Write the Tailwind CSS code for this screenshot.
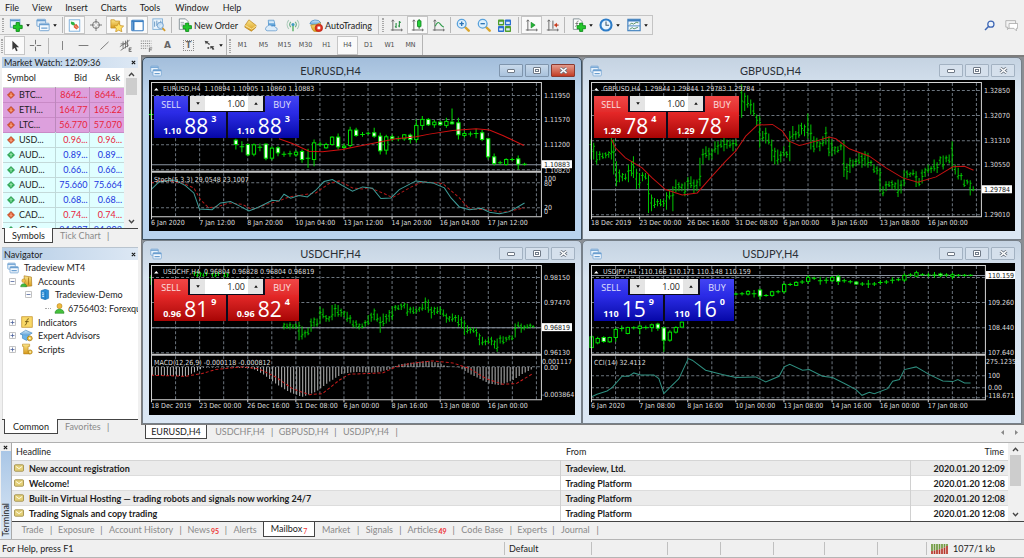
<!DOCTYPE html>
<html lang="en">
<head>
<meta charset="utf-8">
<title>Tradeview MT4</title>
<script src="https://cdn.jsdelivr.net/npm/@tailwindcss/browser@4"></script>
</head>
<body class="flex min-h-screen flex-col bg-[#f0f0f0] font-['Lato','Open_Sans',sans-serif] text-[9px] leading-[11px] text-[#1c1c1c]">

<svg width="0" height="0" class="absolute" aria-hidden="true">
  <defs>
    <linearGradient id="gold" x1="0" y1="0" x2="0" y2="1"><stop offset="0" stop-color="#fbe588"/><stop offset="1" stop-color="#d79a1c"/></linearGradient>
    <linearGradient id="sky" x1="0" y1="0" x2="0" y2="1"><stop offset="0" stop-color="#d6ecfb"/><stop offset="1" stop-color="#3f8fd0"/></linearGradient>
    <symbol id="plus" viewBox="0 0 10 10"><path d="M3.4.6h3.2v2.8h2.8v3.2H6.6v2.8H3.4V6.6H.6V3.4h2.8z" fill="#22c72b" stroke="#0c8a17" stroke-width=".9"/></symbol>
    <symbol id="i-newchart" viewBox="0 0 16 16"><rect x="1.5" y="1.500" width="11" height="9" fill="#e8f3fc" stroke="#6fa3d2"/><path d="M1.500 3h11" stroke="#5d96ca" stroke-width="1.500"/><use href="#plus" x="4" y="4.500" width="12" height="11.500"/></symbol>
    <symbol id="i-windows" viewBox="0 0 16 16"><rect x="1" y="1.500" width="10" height="8" rx="1" fill="#e6f1fb" stroke="#6b9fd0"/><path d="M1 3h10" stroke="#6b9fd0" stroke-width="1.600"/><rect x="4" y="6" width="11" height="8.500" rx="1" fill="#f4f9fe" stroke="#6b9fd0"/><path d="M4 7.500h11M6 11.500h7" stroke="#6b9fd0" stroke-width="1.500"/></symbol>
    <symbol id="i-market" viewBox="0 0 16 16"><rect x="1.500" y="1" width="13" height="14" fill="#fdfefe" stroke="#6aa5d8"/><path d="M3.500 3l4 1 1.500 3-2.500 1L3.500 6z" fill="#2eb344"/><path d="M7.500 7l3-1 3 4-3 3L7 10z" fill="#e2603a"/><path d="M8.500 8l3 3" stroke="#f7c9a6"/></symbol>
    <symbol id="i-target" viewBox="0 0 16 16"><circle cx="8" cy="8" r="4.600" fill="none" stroke="#6d6d6d" stroke-width="1.200"/><path d="M8 0v6M8 10v6M0 8h6M10 8h6" stroke="#6d6d6d" stroke-width="1.200"/></symbol>
    <symbol id="i-favorites" viewBox="0 0 16 16"><path d="M1 2h4l1 1.500h5v8H1z" fill="url(#gold)" stroke="#c18a1c" stroke-width=".8"/><path d="M10 5.200l1.700 3.500 3.900.5-2.800 2.700.7 3.900-3.500-1.900-3.500 1.900.7-3.900-2.800-2.700 3.900-.5z" fill="#ffe169" stroke="#c2881a" stroke-width=".8"/></symbol>
    <symbol id="i-terminal" viewBox="0 0 16 16"><rect x="1" y="1.500" width="14" height="13" rx="1" fill="#fff" stroke="#3a7ec2" stroke-width="1.400"/><path d="M3 2v12" stroke="#3a7ec2" stroke-width="2.600"/><path d="M1 3h14" stroke="#3a7ec2" stroke-width="1.600"/></symbol>
    <symbol id="i-tester" viewBox="0 0 16 16"><rect x="1" y="1" width="11" height="12" fill="#eaf4fc" stroke="#7badd6"/><path d="M3 4v6M5.500 3v6M8 5v5M10 3v5" stroke="#5d8fbd"/><circle cx="9.500" cy="8.500" r="3.500" fill="#cfe6f8" fill-opacity=".8" stroke="#6a9ccb"/><path d="M12 11.500l3 3.300" stroke="#d39b2c" stroke-width="2"/></symbol>
    <symbol id="i-order" viewBox="0 0 16 16"><path d="M1.500 1h7l3 3v9h-10z" fill="#fcfdfd" stroke="#7c8a90"/><path d="M3 5h4M3 7h5M3 9h4" stroke="#7c8a90" stroke-width=".8"/><use href="#plus" x="5" y="5" width="11" height="11"/></symbol>
    <symbol id="i-gold" viewBox="0 0 16 16"><path d="M6 1l9 7-1 3-5 4-8-5 .500-2.500z" fill="url(#gold)" stroke="#b57b12" stroke-width=".8"/><path d="M1.500 8l8 4.500L15 8.500" fill="none" stroke="#fff2b8" stroke-width=".9"/></symbol>
    <symbol id="i-server" viewBox="0 0 16 16"><path d="M4 1.500h7l1.500 7h-8z" fill="url(#sky)" stroke="#3e86c4" stroke-width=".8"/><path d="M5 4h6" stroke="#fff"/><path d="M2.500 14.500a2.600 2.600 0 010-5 3.400 3.400 0 016-.5 3 3 0 014.500 1.500 2 2 0 010 4z" fill="#dcecf9" stroke="#5f97cc" stroke-width=".9"/></symbol>
    <symbol id="i-signal" viewBox="0 0 16 16" fill="none"><circle cx="8" cy="7.500" r="1.800" fill="#3f9cc0"/><path d="M5.500 4.500a4.500 4.500 0 000 6M10.500 4.500a4.500 4.500 0 010 6" stroke="#6db287" stroke-width="1.300"/><path d="M3.200 2.500a7.600 7.600 0 000 10M12.800 2.500a7.600 7.600 0 010 10" stroke="#a9c9b8" stroke-width="1.300"/><path d="M8 9v6" stroke="#54b062" stroke-width="1.600"/></symbol>
    <symbol id="i-auto" viewBox="0 0 16 16"><path d="M1 6.500a6.500 5 0 0112.500-1l-5.500 3.500z" fill="url(#sky)" stroke="#3b80bd" stroke-width=".8"/><path d="M2 8l6-.5 5-2v4a5 5 0 01-9.500 3z" fill="url(#gold)" stroke="#bc8718" stroke-width=".7"/><circle cx="11.300" cy="11.300" r="4.300" fill="#e0301e" stroke="#a81508" stroke-width=".6"/><rect x="9.700" y="9.700" width="3.200" height="3.200" fill="#fff"/></symbol>
    <symbol id="axes" viewBox="0 0 16 16" fill="none" stroke="#606060" stroke-width="1.100"><path d="M3.500 1.500v13M1 13.500h14M2 3l1.500-2L5 3M13.500 12l1.700 1.500-1.700 1.500"/></symbol>
    <symbol id="i-bars" viewBox="0 0 16 16"><use href="#axes"/><path d="M7.500 5v6M7.500 9.500H6M11.500 2.500V10M11.500 4H13.500M11.500 8.500H10" stroke="#1f8b3a" stroke-width="1.300" fill="none"/></symbol>
    <symbol id="i-candles" viewBox="0 0 16 16"><use href="#axes"/><path d="M10 0v12" stroke="#0b7d1b" stroke-width="1.200"/><rect x="8" y="2" width="4.300" height="7.500" rx=".6" fill="#27d33a" stroke="#0b7d1b"/></symbol>
    <symbol id="i-line" viewBox="0 0 16 16"><use href="#axes"/><path d="M4 9c2-5 4-6 6-3s3 3.500 4.500 4" fill="none" stroke="#2f9a4b" stroke-width="1.300"/></symbol>
    <symbol id="i-zoomin" viewBox="0 0 16 16"><path d="M10 10l4.500 4.500" stroke="#d9a52e" stroke-width="2.800" stroke-linecap="round"/><circle cx="6.500" cy="6.500" r="5" fill="#dff0fc" stroke="#5aa2dc" stroke-width="1.500"/><path d="M6.500 4v5M4 6.500h5" stroke="#2a72b4" stroke-width="1.500"/></symbol>
    <symbol id="i-zoomout" viewBox="0 0 16 16"><path d="M10 10l4.500 4.500" stroke="#d9a52e" stroke-width="2.800" stroke-linecap="round"/><circle cx="6.500" cy="6.500" r="5" fill="#dff0fc" stroke="#5aa2dc" stroke-width="1.500"/><path d="M4 6.500h5" stroke="#2a72b4" stroke-width="1.500"/></symbol>
    <symbol id="i-tile" viewBox="0 0 16 16"><rect width="7.500" height="7.500" y=".5" rx="1" fill="#4f9e2c"/><rect x="8.500" width="7.500" height="7.500" y=".5" rx="1" fill="#2b6fd0"/><rect y="8.500" width="7.500" height="7.500" rx="1" fill="#2b6fd0"/><rect x="8.500" y="8.500" width="7.500" height="7.500" rx="1" fill="#4f9e2c"/><path d="M1.500 3.500h4.500v2.500H1.500zM10 3.500h4.500v2.500H10zM1.500 11.500h4.500v2.500H1.500zM10 11.500h4.500v2.500H10z" fill="#dcebf8"/></symbol>
    <symbol id="i-scroll" viewBox="0 0 16 16"><use href="#axes"/><path d="M7.500 4v7l5-3.500z" fill="#22b534" stroke="#0b7d1b" stroke-width=".7"/></symbol>
    <symbol id="i-shift" viewBox="0 0 16 16"><use href="#axes"/><path d="M8.500 2v10" stroke="#606060" stroke-width="1.200"/><path d="M13.500 4.500v6L9.500 7.500z" fill="#d94a2a"/><path d="M12 7.500h3.500" stroke="#a82c14" stroke-width="1.300"/></symbol>
    <symbol id="i-indic" viewBox="0 0 16 16"><path d="M1.500 1h7l3 3v9h-10z" fill="#fcfdfd" stroke="#7c8a90"/><path d="M7.500 3.500c-2 0-2 1.500-2 3s0 3-2 3M3.800 6.300h3.400" fill="none" stroke="#666" stroke-width=".9"/><use href="#plus" x="5" y="5" width="11" height="11"/></symbol>
    <symbol id="i-clock" viewBox="0 0 16 16"><circle cx="8" cy="8" r="6.300" fill="#eaf5fd" stroke="#2c7cc8" stroke-width="2.400"/><path d="M8 4v4.300h3.500" fill="none" stroke="#40576b" stroke-width="1.200"/></symbol>
    <symbol id="i-template" viewBox="0 0 16 16"><rect x="1" y="1.500" width="14" height="13" fill="#eef6fd" stroke="#3f7fbd" stroke-width="1.300"/><path d="M1 3h14" stroke="#3f7fbd" stroke-width="2"/><path d="M1 9h14" stroke="#3f7fbd" stroke-width="1"/><path d="M3 7.500l2.500-1.500 2 1 3-2 2.500.5M3 13l3-2 2 1.500 4.500-2" fill="none" stroke="#4d8a5a" stroke-width="1"/></symbol>
    <symbol id="i-cursor" viewBox="0 0 16 16"><path d="M4.500 1v12l3-2.700L9.500 15l2-.9-2-4.500h4z" fill="#3a3a3a"/></symbol>
    <symbol id="i-cross" viewBox="0 0 16 16"><path d="M8 1v5.500M8 9.500V15M1 8h5.500M9.500 8H15" stroke="#666" stroke-width="1.100"/></symbol>
    <symbol id="i-vline" viewBox="0 0 16 16"><path d="M8 2.500v11" stroke="#777" stroke-width="1.100"/></symbol>
    <symbol id="i-hline" viewBox="0 0 16 16"><path d="M2 8h12" stroke="#777" stroke-width="1.200"/></symbol>
    <symbol id="i-trend" viewBox="0 0 16 16"><path d="M3 13L13 3.500" stroke="#777" stroke-width="1.200"/></symbol>
    <symbol id="i-channel" viewBox="0 0 16 16" fill="none" stroke="#666"><path d="M1 9.500L13 1.500M2 14L12 7.500M5 3v9M8 2v9.500M10.500 1v9M2 6h9"/><path d="M15.500 11h-3v4.500h3M12.500 13.200h2.500" stroke-width="1.200"/></symbol>
    <symbol id="i-fibo" viewBox="0 0 16 16" fill="none" stroke="#777"><path d="M1 2.500h13M1 5.500h13M1 8.500h13M1 11.500h8" stroke-dasharray="1.500 1"/><path d="M15 11h-3.500v5M11.500 13.300h3" stroke-width="1.200"/></symbol>
    <symbol id="i-arrows" viewBox="0 0 16 16"><path d="M2 2l5 1-1.200 1.200 3 2L7.500 7.500 4.800 5 3.500 6.500zM9 8.500l5 .5-1.500 1 1.500 2.500-2 1-1.500-2.500-1.500 1z" fill="#444"/><circle cx="6.500" cy="11" r="1.300" fill="#555"/></symbol>
    <symbol id="s-down" viewBox="0 0 16 16"><path d="M8 .8l7.200 7.200-7.200 7.200L.8 8z" fill="#e0582c" stroke="#9a3414"/><path d="M8 4.500V10M5.500 8.500L8 11l2.500-2.500" fill="none" stroke="#ffd9c0" stroke-width="1.500"/></symbol>
    <symbol id="s-up" viewBox="0 0 16 16"><path d="M8 .8l7.200 7.200-7.200 7.200L.8 8z" fill="#2fb055" stroke="#12803a"/><path d="M8 11.500V6M5.500 7.500L8 5l2.500 2.500" fill="none" stroke="#dcffe4" stroke-width="1.500"/></symbol>
    <symbol id="n-accounts" viewBox="0 0 16 16"><path d="M5 1l9 1.500.5 11L6 14z" fill="url(#gold)" stroke="#a9771a" stroke-width=".8"/><circle cx="4.500" cy="7" r="2.300" fill="#f1c04c" stroke="#a9771a" stroke-width=".5"/><path d="M.8 14.500c0-5 7.500-5 7.500 0z" fill="#42ba3c" stroke="#1f7f21" stroke-width=".6"/><path d="M10.500 3v9" stroke="#a36f14"/></symbol>
    <symbol id="n-server" viewBox="0 0 16 16"><path d="M3 2.500l6-2 5 1.500v11.500l-5 2-6-2z" fill="#2c8fd8" stroke="#1464a8" stroke-width=".8"/><path d="M9 4v11" stroke="#1464a8" stroke-width=".8"/><path d="M4.500 5.500l3 .5M4.500 8l3 .5M4.500 10.500l3 .5" stroke="#e4f4ff" stroke-width="1.300"/></symbol>
    <symbol id="n-user" viewBox="0 0 16 16"><circle cx="8" cy="4.500" r="3.700" fill="#f0ba3e" stroke="#a87613" stroke-width=".7"/><path d="M1.500 15c-.5-8 13.500-8 13 0z" fill="#45c13c" stroke="#1d8120" stroke-width=".8"/></symbol>
    <symbol id="n-indic" viewBox="0 0 16 16"><rect x="1" y="1" width="14" height="14" fill="#f9d867" stroke="#c29224"/><path d="M10.500 3.800c-2-.3-2.500 1-2.800 3.500S7 12 5 12.200M5.300 7.500h5" fill="none" stroke="#6d5210" stroke-width="1.200"/></symbol>
    <symbol id="n-expert" viewBox="0 0 16 16"><path d="M0 6l7-4.500L15 5 8 9.500z" fill="url(#sky)" stroke="#2f78b5" stroke-width=".7"/><path d="M3 7.500v4l5 2.500 3-2V8" fill="#6cb3e6" stroke="#2f78b5" stroke-width=".7"/><circle cx="12" cy="11.500" r="3" fill="#f4c842" stroke="#a87a13"/><circle cx="12" cy="11.500" r="1" fill="#fff"/></symbol>
    <symbol id="n-script" viewBox="0 0 16 16"><path d="M2 1.500h9.500v3H9.500v7H12v3H3.500v-10H2z" fill="url(#gold)" stroke="#b88317" stroke-width=".8"/><circle cx="12.200" cy="12" r="2.700" fill="#f4c842" stroke="#a87a13"/><circle cx="12.200" cy="12" r=".9" fill="#fff"/></symbol>
    <symbol id="mail" viewBox="0 0 16 12"><rect x=".8" y=".8" width="14.400" height="10.400" rx="1.500" fill="#e3cf78" stroke="#94803a" stroke-width="1.200"/><path d="M3 3.500l5 3.500 5-3.500" fill="none" stroke="#fffbe0" stroke-width="1.600"/></symbol>
    <symbol id="minus-box" viewBox="0 0 9 9"><rect x=".5" y=".5" width="8" height="8" rx="1" fill="#fdfdfd" stroke="#a5a5a5"/><path d="M2 4.500h5" stroke="#4a5f9a"/></symbol>
    <symbol id="plus-box" viewBox="0 0 9 9"><rect x=".5" y=".5" width="8" height="8" rx="1" fill="#fdfdfd" stroke="#a5a5a5"/><path d="M2 4.500h5M4.500 2v5" stroke="#4a5f9a"/></symbol>
    <symbol id="cross" viewBox="0 0 8 8"><path d="M1.300 1.300l5.400 5.400M6.700 1.300L1.300 6.700" stroke="#111" stroke-width="1.700"/></symbol>
    <symbol id="chev-up" viewBox="0 0 8 6"><path d="M1 4.800L4 1.500l3 3.300" fill="none" stroke="#444" stroke-width="1.600"/></symbol>
    <symbol id="chev-down" viewBox="0 0 8 6"><path d="M1 1.200L4 4.500l3-3.300" fill="none" stroke="#444" stroke-width="1.600"/></symbol>
    <symbol id="caret" viewBox="0 0 6 4"><path d="M.3.3h5.400L3 3.700z" fill="#111"/></symbol>
  </defs>
</svg>

<!-- Menu bar -->
<header>
  <nav class="flex h-[15px] items-center gap-[13px] pl-[5px]" aria-label="Main menu">
    <button>File</button><button>View</button><button>Insert</button><button>Charts</button><button>Tools</button><button class="pl-[2px]">Window</button><button class="pl-px">Help</button>
  </nav>

  <!-- Standard toolbar -->
  <div class="flex h-[20px]">
    <div class="flex items-center border-t border-r border-b border-[#c4c4c4] [&>button]:flex [&>button]:h-[18px] [&>button]:items-center [&>button]:justify-center">
      <span class="mx-[2px] h-[14px] w-[2px] border-x border-dotted border-[#a8a8a8]"></span>
      <button class="w-[26px] gap-[3px]" aria-label="New chart"><svg class="size-[14px]"><use href="#i-newchart"/></svg><svg class="h-[3px] w-[4px]"><use href="#caret"/></svg></button>
      <button class="w-[29px] gap-[3px]" aria-label="Profiles"><svg class="size-[14px]"><use href="#i-windows"/></svg><svg class="h-[3px] w-[4px]"><use href="#caret"/></svg></button>
      <span class="mx-[1px] h-[16px] w-px bg-[#b8b8b8]"></span>
      <button class="w-[21px] border border-[#c6c6c6] bg-[#fafafa]" aria-label="Market Watch"><svg class="size-[13px]"><use href="#i-market"/></svg></button>
      <button class="w-[21px]" aria-label="Data window"><svg class="size-[12px]"><use href="#i-target"/></svg></button>
      <button class="w-[21px] border border-[#c6c6c6] bg-[#fafafa]" aria-label="Navigator"><svg class="size-[14px]"><use href="#i-favorites"/></svg></button>
      <button class="w-[21px] border border-[#c6c6c6] bg-[#fafafa]" aria-label="Terminal"><svg class="size-[13px]"><use href="#i-terminal"/></svg></button>
      <button class="w-[21px]" aria-label="Strategy Tester"><svg class="size-[14px]"><use href="#i-tester"/></svg></button>
      <span class="mr-[5px] ml-[2px] h-[16px] w-px bg-[#b8b8b8]"></span>
      <button class="w-[62px] gap-[2px] whitespace-nowrap"><svg class="size-[14px] shrink-0"><use href="#i-order"/></svg>New Order</button>
      <button class="w-[22px]" aria-label="MetaEditor"><svg class="size-[13px]"><use href="#i-gold"/></svg></button>
      <button class="w-[21px]" aria-label="Virtual hosting"><svg class="size-[13px]"><use href="#i-server"/></svg></button>
      <button class="w-[21px]" aria-label="Signals"><svg class="size-[14px]"><use href="#i-signal"/></svg></button>
      <button class="w-[75px] gap-[2px] whitespace-nowrap"><svg class="size-[14px] shrink-0"><use href="#i-auto"/></svg>AutoTrading</button>
    </div>
    <div class="flex items-center border-t border-r border-b border-[#c4c4c4] [&>button]:flex [&>button]:h-[18px] [&>button]:items-center [&>button]:justify-center">
      <span class="mr-[2px] ml-[3px] h-[14px] w-[2px] border-x border-dotted border-[#a8a8a8]"></span>
      <button class="w-[21px]" aria-label="Bar chart"><svg class="size-[13px]"><use href="#i-bars"/></svg></button>
      <button class="w-[21px] border border-[#c6c6c6] bg-[#fafafa]" aria-label="Candlesticks"><svg class="size-[13px]"><use href="#i-candles"/></svg></button>
      <button class="w-[21px]" aria-label="Line chart"><svg class="size-[13px]"><use href="#i-line"/></svg></button>
      <span class="mx-[1px] h-[16px] w-px bg-[#b8b8b8]"></span>
      <button class="w-[21px]" aria-label="Zoom in"><svg class="size-[14px]"><use href="#i-zoomin"/></svg></button>
      <button class="w-[21px]" aria-label="Zoom out"><svg class="size-[14px]"><use href="#i-zoomout"/></svg></button>
      <button class="w-[21px]" aria-label="Tile windows"><svg class="size-[13px]"><use href="#i-tile"/></svg></button>
      <span class="mr-[2px] ml-[3px] h-[16px] w-px bg-[#b8b8b8]"></span>
      <button class="w-[21px] border border-[#c6c6c6] bg-[#fafafa]" aria-label="Auto scroll"><svg class="size-[13px]"><use href="#i-scroll"/></svg></button>
      <button class="w-[21px]" aria-label="Chart shift"><svg class="size-[13px]"><use href="#i-shift"/></svg></button>
      <span class="mr-[4px] ml-[1px] h-[16px] w-px bg-[#b8b8b8]"></span>
      <button class="w-[26px] gap-[3px]" aria-label="Indicators"><svg class="size-[14px]"><use href="#i-indic"/></svg><svg class="h-[3px] w-[4px]"><use href="#caret"/></svg></button>
      <button class="w-[28px] gap-[3px]" aria-label="Periods"><svg class="size-[14px]"><use href="#i-clock"/></svg><svg class="h-[3px] w-[4px]"><use href="#caret"/></svg></button>
      <button class="w-[29px] gap-[3px]" aria-label="Templates"><svg class="size-[14px]"><use href="#i-template"/></svg><svg class="h-[3px] w-[4px]"><use href="#caret"/></svg></button>
    </div>
    <div class="ml-auto flex items-center gap-[10px] pr-[6px]">
      <button aria-label="Search"><svg class="size-[11px]" viewBox="0 0 16 16" fill="none"><circle cx="10" cy="6" r="4.500" fill="#eef4fb" stroke="#3d66b4" stroke-width="1.800"/><path d="M6.500 9.500L1.500 14.500" stroke="#3d66b4" stroke-width="2.200"/></svg></button>
      <button aria-label="Messages"><svg class="size-[13px]" viewBox="0 0 16 16"><path d="M1 2h12v8H6l-3 3v-3H1z" fill="#f3f3f3" stroke="#a8a8a8"/><path d="M5 5.500h10.500v6H14v3l-3-3H5z" fill="#fff" stroke="#a8a8a8"/></svg></button>
    </div>
  </div>

  <!-- Line studies and timeframes toolbar -->
  <div class="flex h-[20px] text-[#4a4a4a]">
    <div class="flex items-center border-r border-[#b4b4b4] pt-px [&>button]:flex [&>button]:h-[19px] [&>button]:w-[21px] [&>button]:items-center [&>button]:justify-center">
      <span class="mx-[1px] h-[14px] w-[2px] border-x border-dotted border-[#a8a8a8]"></span>
      <button class="border border-[#c6c6c6] bg-[#fafafa]" aria-label="Cursor"><svg class="size-[12px]"><use href="#i-cursor"/></svg></button>
      <button aria-label="Crosshair"><svg class="size-[13px]"><use href="#i-cross"/></svg></button>
      <span class="mr-[3px] ml-[2px] h-[16px] w-px bg-[#b8b8b8]"></span>
      <button aria-label="Vertical line"><svg class="size-[13px]"><use href="#i-vline"/></svg></button>
      <button aria-label="Horizontal line"><svg class="size-[13px]"><use href="#i-hline"/></svg></button>
      <button aria-label="Trendline"><svg class="size-[13px]"><use href="#i-trend"/></svg></button>
      <button aria-label="Equidistant channel"><svg class="size-[13px]"><use href="#i-channel"/></svg></button>
      <button aria-label="Fibonacci"><svg class="size-[13px]"><use href="#i-fibo"/></svg></button>
      <button aria-label="Text" class="font-['DejaVu_Sans'] font-bold text-[#666]">A</button>
      <button aria-label="Text label"><span class="flex size-[11px] items-center justify-center border border-dotted border-[#888] font-['DejaVu_Sans'] text-[8px] font-bold text-[#666]">T</span></button>
      <button class="gap-[3px] pl-[6px]" aria-label="Arrows"><svg class="size-[13px] shrink-0"><use href="#i-arrows"/></svg><svg class="h-[3px] w-[4px] shrink-0"><use href="#caret"/></svg></button>
      <span class="w-[6px]"></span>
    </div>
    <div class="flex items-center border-r border-[#b4b4b4] pt-px pr-[1px] font-['DejaVu_Sans_Condensed','DejaVu_Sans',sans-serif] text-[7px] [&>button]:h-[19px] [&>button]:w-[21px]">
      <span class="mr-[1px] ml-[2px] h-[14px] w-[2px] border-x border-dotted border-[#a8a8a8]"></span>
      <button>M1</button><button>M5</button><button>M15</button><button>M30</button><button>H1</button>
      <button class="border border-[#c6c6c6] bg-[#fafafa]">H4</button>
      <button>D1</button><button>W1</button><button>MN</button>
    </div>
  </div>
</header>

<div class="flex">
  <!-- Docked panels -->
  <aside class="flex w-[141px] shrink-0 flex-col pt-[2px] pr-[3px] pl-[2px]">
    <section class="flex h-[187px] flex-col" aria-label="Market Watch">
      <div class="flex h-[11px] items-center justify-between bg-linear-to-r from-[#b5cde6] to-[#dde8f4] px-[2px]">
        <h2>Market Watch: 12:09:36</h2><button aria-label="Close Market Watch"><svg class="size-[5px]"><use href="#cross"/></svg></button>
      </div>
      <div class="flex h-[160px] bg-white">
        <div class="min-w-0 flex-1 overflow-hidden pl-px">
          <table class="w-full table-fixed border-collapse">
            <colgroup><col class="w-[52px]"><col class="w-[34px]"><col></colgroup>
            <thead><tr class="h-[19px] border-b border-[#d5d5d5]"><th class="pl-[4px] text-left font-normal">Symbol</th><th class="pr-[2px] text-right font-normal">Bid</th><th class="pr-[4px] text-right font-normal">Ask</th></tr></thead>
            <tbody id="quotes"></tbody>
          </table>
        </div>
        <div class="flex w-[14px] flex-col items-center bg-[#f0f0f0] py-[4px]">
          <button aria-label="Scroll up"><svg class="h-[5px] w-[7px]"><use href="#chev-up"/></svg></button>
          <span class="mt-px h-[17px] w-[11px] bg-[#cdcdcd]"></span>
          <button class="mt-auto" aria-label="Scroll down"><svg class="h-[5px] w-[7px]"><use href="#chev-down"/></svg></button>
        </div>
      </div>
      <div class="flex h-[16px] text-[#8a8a8a]">
        <span class="w-[2px] border-t border-[#444]"></span>
        <button class="h-[15px] w-[49px] border-r border-b border-l border-[#444] bg-white text-[#1c1c1c]">Symbols</button>
        <button class="h-[14px] flex-1 border-t border-[#444] pl-[7px] text-left">Tick Chart <span class="ml-[4px] text-[#777]">|</span></button>
      </div>
    </section>

    <section class="mt-[3px] flex flex-1 flex-col border-t border-[#b9c4cf]" aria-label="Navigator">
      <div class="flex h-[12px] items-center justify-between bg-linear-to-r from-[#b5cde6] to-[#dde8f4] px-[2px]">
        <h2>Navigator</h2><button aria-label="Close Navigator"><svg class="size-[5px]"><use href="#cross"/></svg></button>
      </div>
      <div class="h-[159px] overflow-hidden border-l border-[#ddd] bg-white">
        <ul class="grid h-[96px] auto-rows-fr pt-[1px] whitespace-nowrap [&>li]:flex [&>li]:items-center">
          <li class="gap-[5px] pl-[4px]"><svg class="size-[12px]"><use href="#i-windows"/></svg>Tradeview MT4</li>
          <li class="gap-[4px] pl-[6px]"><svg class="size-[7px]"><use href="#minus-box"/></svg><svg class="size-[13px]"><use href="#n-accounts"/></svg><span class="pl-px">Accounts</span></li>
          <li class="gap-[5px] pl-[22px]"><svg class="size-[7px]"><use href="#minus-box"/></svg><svg class="ml-[2px] size-[11px]"><use href="#n-server"/></svg>Tradeview-Demo</li>
          <li class="gap-[3px] pl-[42px]"><span class="w-[6px] border-t border-dotted border-[#aaa]"></span><svg class="size-[11px] shrink-0"><use href="#n-user"/></svg>6756403: Forexqu</li>
          <li class="gap-[4px] pl-[6px]"><svg class="size-[7px]"><use href="#plus-box"/></svg><svg class="ml-px size-[12px]"><use href="#n-indic"/></svg><span class="pl-px">Indicators</span></li>
          <li class="gap-[4px] pl-[6px]"><svg class="size-[7px]"><use href="#plus-box"/></svg><svg class="size-[13px]"><use href="#n-expert"/></svg><span class="pl-px">Expert Advisors</span></li>
          <li class="gap-[4px] pl-[6px]"><svg class="size-[7px]"><use href="#plus-box"/></svg><svg class="ml-px size-[12px]"><use href="#n-script"/></svg><span class="pl-px">Scripts</span></li>
        </ul>
      </div>
      <div class="flex h-[16px] text-[#8a8a8a]">
        <span class="w-[2px] border-t border-[#444]"></span>
        <button class="h-[15px] w-[54px] border-r border-b border-l border-[#444] bg-white text-[#1c1c1c]">Common</button>
        <button class="h-[14px] flex-1 border-t border-[#444] pl-[7px] text-left">Favorites <span class="ml-[4px] text-[#777]">|</span></button>
      </div>
    </section>
  </aside>

  <!-- Chart windows -->
  <main class="min-w-0 flex-1">
    <div id="windows" class="grid grid-cols-2 border-t-2 border-b border-l border-[#7d7d7d] bg-[#8b8f94] pr-[2px]"></div>
    <div class="flex h-[17px] items-start pl-[4px] text-[#8a8a8a]">
      <button class="h-[14px] w-[62px] border-r border-b border-l border-[#444] bg-white text-[#1c1c1c]">EURUSD,H4</button>
      <button class="h-[14px] w-[64px] pl-[2px]">USDCHF,H4</button><span class="pt-px text-[#777]">|</span>
      <button class="h-[14px] w-[61px]">GBPUSD,H4</button><span class="pt-px text-[#777]">|</span>
      <button class="h-[14px] w-[59px]">USDJPY,H4</button><span class="pt-px text-[#777]">|</span>
      <div class="mt-[5px] mr-[6px] ml-auto flex gap-[11px]">
        <button aria-label="Previous tab"><svg class="h-[5px] w-[3px]" viewBox="0 0 3 5"><path d="M3 0v5L0 2.500z" fill="#888"/></svg></button>
        <button aria-label="Next tab"><svg class="h-[5px] w-[3px]" viewBox="0 0 3 5"><path d="M0 0v5l3-2.500z" fill="#888"/></svg></button>
      </div>
    </div>
  </main>
</div>

<!-- Terminal -->
<section class="flex h-[97px] border-t border-[#b0b0b0]" aria-label="Terminal">
  <div class="flex w-[12px] flex-col items-center border-r border-[#aaa] pt-[2px]">
    <button aria-label="Close Terminal"><svg class="size-[5px]"><use href="#cross"/></svg></button>
    <div class="mt-[1px] flex w-[10px] flex-1 items-center bg-linear-to-b from-[#a9c6e6] to-[#dde9f5] [writing-mode:vertical-rl]"><h2 class="mt-auto mb-[2px] rotate-180">Terminal</h2></div>
  </div>
  <div class="min-w-0 flex-1">
    <div class="flex h-[79px] border-b border-[#444] bg-white">
      <table class="flex-1 table-fixed border-collapse">
        <colgroup><col><col class="w-[350px]"><col class="w-[98px]"></colgroup>
        <thead><tr class="h-[18px] border-b border-[#d5d5d5]"><th class="pl-[4px] text-left font-normal">Headline</th><th class="pl-[6px] text-left font-normal">From</th><th class="pr-[4px] text-right font-normal">Time</th></tr></thead>
        <tbody id="mails" class="font-bold"></tbody>
      </table>
      <div class="flex w-[14px] flex-col items-center bg-[#f0f0f0] py-[4px]">
        <button aria-label="Scroll up"><svg class="h-[5px] w-[7px]"><use href="#chev-up"/></svg></button>
        <span class="mt-[3px] h-[31px] w-[11px] bg-[#cdcdcd]"></span>
        <button class="mt-auto" aria-label="Scroll down"><svg class="h-[5px] w-[7px]"><use href="#chev-down"/></svg></button>
      </div>
      <span class="w-[2px] bg-[#f0f0f0]"></span>
    </div>
    <nav class="flex h-[17px] items-start text-[#8a8a8a] [&_sub]:ml-px [&>button]:h-[15px] [&>span]:mt-[2px] [&>span]:text-[#777]" aria-label="Terminal tabs">
      <button class="w-[38px] pl-[3px]">Trade</button><span>|</span>
      <button class="w-[48px]">Exposure</button><span>|</span>
      <button class="w-[77px]">Account History</button><span>|</span>
      <button class="w-[43px]">News<sub class="text-[7px] font-bold text-[#e33]">95</sub></button><span>|</span>
      <button class="w-[36px]">Alerts</button>
      <button class="w-[52px] border-r border-b border-l border-[#444] bg-white text-[#1c1c1c]">Mailbox<sub class="text-[7px] text-[#e33]">7</sub></button>
      <button class="w-[42px]">Market</button><span>|</span>
      <button class="w-[40px]">Signals</button><span>|</span>
      <button class="w-[51px]">Articles<sub class="text-[7px] font-bold text-[#e33]">49</sub></button><span>|</span>
      <button class="w-[55px]">Code Base</button><span>|</span>
      <button class="w-[40px]">Experts</button><span>|</span>
      <button class="w-[42px]">Journal</button><span>|</span>
    </nav>
  </div>
</section>

<!-- Status bar -->
<footer class="flex flex-1 items-stretch border-t border-b border-[#b5b5b5] [&>div]:my-[2px] [&>div]:flex [&>div]:items-center [&>div]:border-r [&>div]:border-[#c0c0c0]">
  <div class="flex-1 pt-px pl-[2px]">For Help, press F1</div>
  <div class="w-[87px] pt-px pl-[4px]">Default</div><div class="w-[76px]"></div><div class="w-[53px]"></div><div class="w-[53px]"></div><div class="w-[51px]"></div><div class="w-[53px]"></div><div class="w-[49px]"></div>
  <span class="flex w-[97px] items-center gap-[4px] pt-px pl-[4px]"><svg class="h-[10px] w-[18px]" viewBox="0 0 18 10"><path d="M1 0v7M3.500 0v6.500M6 0v6M8.500 0v5.500M11 0v4.500M13.500 0v3.500M16 0v2" stroke="#6f9a3e" stroke-width="1.700"/><path d="M1 7v3M3.500 6.500V10M6 6v4M8.500 5.500V10M11 4.500V10M13.500 3.500V10M16 2v8" stroke="#b8362a" stroke-width="1.700"/></svg>1077/1 kb</span>
</footer>

<script>
/* ---- Market watch and mailbox rows ---- */
const quotes = [
  ['BTC...','8642...','8644...',0,1],['ETH...','164.77','165.22',0,1],['LTC...','56.770','57.070',0,1],
  ['USD...','0.96...','0.96...',0,0],['AUD...','0.89...','0.89...',1,0],['AUD...','0.66...','0.66...',1,0],
  ['AUD...','75.660','75.664',1,0],['AUD...','0.68...','0.68...',1,0],['CAD...','0.74...','0.74...',0,0],['CAD...','84.207','84.203',1,0]];
document.getElementById('quotes').innerHTML = quotes.map(([s,b,a,up,hot]) => `
  <tr class="h-[15px] border-b ${hot ? 'border-[#c98ac6] bg-[#dda0dd]' : 'border-[#c3d9d9] bg-[#e0ffff]'}">
    <td class="border-r border-black/15 pl-[4px]"><span class="flex items-center gap-[4px]"><svg class="size-[8px]"><use href="${up ? '#s-up' : '#s-down'}"/></svg>${s}</span></td>
    <td class="border-r border-black/15 pr-px text-right ${up ? 'text-[#1a35e0]' : 'text-[#e8233c]'}">${b}</td>
    <td class="pr-[2px] text-right ${up ? 'text-[#1a35e0]' : 'text-[#e8233c]'}">${a}</td>
  </tr>`).join('');

const mails = [
  ['New account registration','Tradeview, Ltd.','2020.01.20 12:09'],['Welcome!','Trading Platform','2020.01.20 12:08'],
  ['Built-in Virtual Hosting — trading robots and signals now working 24/7','Trading Platform','2020.01.20 12:08'],
  ['Trading Signals and copy trading','Trading Platform','2020.01.20 12:08']];
document.getElementById('mails').innerHTML = mails.map(([h,f,t]) => `
  <tr class="h-[15px] border-t border-[#dcdcdc] odd:bg-[#ebebeb]">
    <td class="border-r border-[#d0d0d0] pl-[2px]"><span class="flex items-center gap-[5px]"><svg class="h-[8px] w-[10px]"><use href="#mail"/></svg>${h}</span></td>
    <td class="border-r border-[#d0d0d0] pl-[5px]">${f}</td>
    <td class="pr-[3px] text-right">${t}</td>
  </tr>`).join('');

/* ---- Charts. Series points are in thirds of a pixel. ---- */
const shift = (pts, dx) => pts.map(p => [p[0] + dx, ...p.slice(1)]);
const line = (pts, color, dash) => `<polyline points="${pts.map(p => p.join(',')).join(' ')}" fill="none" stroke="${color}" stroke-width="3" ${dash ? 'stroke-dasharray="9 6"' : ''}/>`;
/* candle: x, high, low, body top, body bottom, kind (1 filled, 0 hollow) */
const candles = list => list.map(([x,h,l,t,b,k]) => t === undefined
  ? `<path d="M${x} ${h}V${l}M${x-7} ${(h+l)/2}h14" stroke="#00e000" stroke-width="3"/>`
  : `<path d="M${x} ${h}V${l}" stroke="#00e000" stroke-width="3"/><rect x="${x-5}" y="${t}" width="10" height="${b-t}" fill="${k ? '#e6ffe6' : '#000'}" stroke="#00e000" stroke-width="3"/>`).join('');
/* bar: x, high, low */
const bars = list => list.map(([x,h,l], i) => {
  const o = h + (l-h) * (.25 + .5 * ((i * 7) % 5) / 4), c = h + (l-h) * (.2 + .6 * ((i * 3 + 2) % 5) / 4);
  return `<path d="M${x} ${h}V${l}M${x-4} ${o}h4M${x} ${c}h4" stroke="#00c400" stroke-width="3"/>`;
}).join('');
const histogram = (pts, zero) => {
  let out = '';
  for (let x = pts[0][0], i = 0; x <= pts[pts.length-1][0]; x += 9) {
    while (i < pts.length - 2 && pts[i+1][0] < x) i++;
    const [a, b] = [pts[i], pts[i+1]];
    out += `M${x} ${zero}V${a[1] + (b[1]-a[1]) * (x-a[0]) / (b[0]-a[0])}`;
  }
  return `<path d="${out}" stroke="#b8b8b8" stroke-width="3"/>`;
};

const eur = candles([[27,160,190],[281,248,280,252,265,1],[299,255,288],[317,262,300,265,296,1],[335,262,300,266,294,0],[353,262,285],[371,262,312,264,306,1],[389,270,312,276,306,0],[407,270,300,275,290,1],[425,286,302],[443,284,302],[461,282,302,288,296,0],[479,280,320,286,310,1],[497,278,335],[515,250,330,260,310,0],[533,256,272],[551,260,278,265,275,0],[569,240,268,243,265,0],[587,232,280,243,272,1],[605,262,278,270,274,0],[623,212,274,222,268,0],[641,215,242,222,238,1]]
  .concat(shift([[0,228,242],[17,226,237],[35,215,245,230,240,1],[53,230,295,240,284,1],[71,236,295,242,282,0],[89,235,255,242,248,1],[107,240,255],[125,234,254,236,248,0],[143,232,262,237,250,1],[161,190,260,208,250,0],[179,180,222,190,208,0],[197,186,210,190,206,1],[215,192,215,198,206,0],[233,195,208,198,206,1],[251,185,215,196,208,0],[268,157,205,198,203,1],[287,185,250,200,236,1],[305,225,245,232,238,0],[323,226,241],[340,218,246],[358,222,255,230,250,1],[376,245,310,248,302,1],[394,292,328,302,322,1],[412,314,326],[430,306,328,310,325,0],[448,304,316],[466,298,340,308,324,1],[485,320,328]], 660)))
  + line([[410,248],[450,262],[500,285],[540,287],[600,280],[640,272],[700,260],[760,248],[820,242],[860,234],[930,223],[1000,218],[1040,222],[1080,238],[1143,268]], '#d01010')
  + line([[27,380],[60,372],[120,380],[155,395],[175,430],[200,455],[230,450],[260,440],[300,444],[330,460],[370,445],[410,434],[440,422],[480,416],[520,410],[560,382],[590,374],[630,395],[660,398],[680,394],[720,410],[750,424],[800,395],[840,376],[900,382],[950,425],[980,458],[1030,460],[1080,468],[1145,455]], '#b01818', 1)
  + line([[27,400],[50,378],[80,372],[100,372],[130,388],[155,410],[172,458],[210,460],[235,440],[265,436],[290,448],[320,464],[350,452],[390,432],[410,434],[425,414],[445,426],[470,418],[495,422],[520,402],[545,376],[570,370],[600,388],[630,405],[660,392],[690,396],[715,427],[745,425],[770,400],[820,374],[870,380],[905,395],[925,425],[950,452],[980,460],[1015,456],[1040,468],[1070,472],[1100,466],[1145,440]], '#3f9c98');

const gbp = bars([[27,250,310],[35,260,310],[44,285,325],[53,285,312],[62,290,308],[71,288,306],[80,285,305],[88,240,310],[95,250,355],[103,315,390],[112,340,378],[121,350,375],[130,352,372],[139,325,378],[148,315,360],[154,300,365],[163,338,398],[172,350,395],[181,348,375],[190,350,370],[199,355,470],[208,415,465],[217,425,455],[226,428,450],[235,428,450],[244,430,452],[253,408,460],[262,400,430],[272,390,465],[281,370,408],[290,378,405],[299,382,405],[308,378,420],[317,362,398],[326,360,395],[335,370,410],[344,370,405],[353,305,390],[362,278,325],[371,270,305],[380,275,312],[389,278,310],[398,255,290],[407,255,295],[416,250,275],[425,245,285],[434,250,278],[443,250,275],[452,250,285],[461,250,270],[478,85,185],[487,110,165],[496,118,155],[505,130,175],[514,140,180],[523,175,210],[532,180,275],[541,225,255],[550,215,262],[559,232,265],[568,250,315],[577,275,325],[586,280,325],[595,285,318],[604,270,300],[613,285,305],[622,225,315],[631,210,250],[640,225,250],[649,205,245],[657,200,235]]
  .concat(shift([[6,205,240],[16,172,248],[25,205,280],[34,240,288],[43,245,275],[52,255,285],[61,240,270],[70,212,265],[79,240,300],[88,250,300],[97,270,295],[106,270,290],[115,262,282],[124,255,362],[133,322,370],[142,305,350],[151,310,335],[160,308,330],[169,290,325],[178,290,335],[187,285,330],[196,290,335],[205,312,330],[214,325,350],[223,330,355],[232,335,408],[241,390,420],[250,375,405],[259,375,392],[268,372,398],[277,378,402],[286,370,422],[295,372,412],[304,342,390],[313,342,365],[322,348,362],[331,340,358],[340,345,392],[349,365,390],[358,340,382],[367,335,362],[376,325,350],[385,330,350],[394,310,345],[403,318,350],[412,300,325],[421,298,340],[430,298,318],[439,295,322],[448,255,340],[457,325,355],[466,335,370],[475,350,372],[484,370,392],[493,370,385],[502,372,418],[511,390,405]], 660)))
  + line([[88,250],[100,275],[130,305],[180,335],[210,365],[250,400],[300,416],[345,410],[380,370],[430,315],[460,285],[490,240],[525,207],[570,205],[600,225],[620,255],[650,268],[660,266],[700,255],[740,243],[760,248],[800,278],[860,300],[910,335],[960,365],[1005,378],[1060,362],[1110,332],[1145,330],[1172,342]], '#c41212');

const chf = bars([[27,105,135],[157,95,108],[166,93,112],[175,96,110],[184,98,110],[193,95,108],[211,98,110],[220,97,112],[229,95,108],[247,96,112],[256,98,112],[425,248,268],[434,250,266],[443,246,268],[452,252,266],[461,250,266],[470,245,300],[479,258,298],[488,270,292],[497,262,285],[506,235,275],[515,232,260],[524,235,260],[533,200,250],[542,205,235],[551,225,245],[560,228,245],[569,195,240],[578,192,230],[587,195,230],[596,205,230],[605,212,232],[614,215,245],[623,225,250],[632,240,262],[641,240,265],[650,250,268],[659,250,265],[668,240,260],[677,225,255],[686,218,245],[695,205,240],[704,220,245],[713,230,278],[722,220,258],[731,222,250],[740,210,245],[749,198,240],[758,195,212],[767,195,210],[776,190,210],[785,188,205],[794,190,228],[803,200,220],[812,200,222],[821,205,220],[830,200,215],[839,190,212],[848,172,210],[857,178,218],[866,200,235],[875,200,225],[884,200,222],[893,200,225],[902,208,230],[911,220,248],[920,228,245],[929,220,245],[938,225,245],[947,225,260],[956,230,265],[965,240,285],[974,255,280],[983,262,280],[992,262,278],[1001,265,290],[1010,280,315],[1019,290,315],[1028,298,315],[1037,292,310],[1046,290,315],[1055,300,325],[1063,295,335],[1072,285,310],[1081,288,312],[1090,290,305],[1099,285,300],[1108,285,300],[1117,250,292],[1126,245,262],[1135,250,278],[1144,255,270],[1153,252,265],[1162,250,265],[1171,255,262]])
  + histogram([[31,405],[130,408],[160,395],[185,382],[250,381],[330,384],[360,400],[400,430],[440,455],[480,470],[520,455],[560,425],[600,400],[640,395],[700,397],[740,388],[770,372],[850,362],[890,368],[910,378],[950,382],[980,400],[1040,430],[1070,435],[1110,420],[1140,400],[1170,385]], 380)
  + line([[27,405],[130,408],[180,400],[220,388],[300,380],[350,386],[400,410],[450,445],[500,463],[540,460],[590,420],[620,402],[720,398],[760,380],[800,370],[870,362],[930,368],[980,385],[1030,415],[1080,432],[1120,430],[1170,400]], '#c81c1c', 1);

const jpy = candles([[29,285,325,290,322,0],[47,290,312,295,308,0],[65,288,308,292,304,1],[83,290,308,292,305,0],[101,262,305,268,292,0],[119,256,274],[137,260,282,262,280,0],[155,258,268],[173,252,282,258,265,0],[191,256,268],[209,250,275,254,262,0],[227,248,272,252,264,1],[245,260,335,263,300,1],[263,270,305,276,300,0],[281,258,280,262,276,0],[299,245,262,246,261,0],[461,158,166],[479,156,166],[497,150,166,154,162,0],[515,150,172],[533,145,180,150,168,1],[551,162,170],[569,152,170,155,166,0],[587,150,160],[605,128,160,133,155,0],[623,128,138],[641,124,138,127,136,0],[659,120,132],[677,105,132,112,124,0],[695,110,120],[713,110,134],[731,112,130],[749,108,126,112,122,0],[767,104,135,110,124,1],[785,116,128],[803,120,130],[821,124,134,126,132,1],[839,126,138],[857,120,144],[875,126,138],[893,120,134],[911,120,132],[929,112,130],[947,114,124],[965,100,126,106,120,0],[983,100,110],[1001,92,112,98,108,0],[1019,100,108],[1037,98,112],[1055,96,114],[1073,98,112,102,107,1],[1091,100,110],[1109,98,118,104,110,0],[1127,102,110],[1145,102,110],[1163,103,109]])
  + line([[27,470],[45,462],[75,452],[90,442],[120,408],[140,408],[155,398],[175,404],[215,404],[230,415],[245,460],[265,440],[290,415],[318,355],[330,360],[370,390],[420,403],[460,412],[520,410],[550,425],[590,408],[605,380],[622,372],[660,390],[680,388],[720,408],[750,412],[790,432],[820,448],[838,465],[860,456],[875,460],[915,445],[930,423],[950,418],[965,388],[1000,380],[1040,403],[1080,422],[1110,424],[1125,418],[1145,428],[1163,428]], '#2f8f80');

const blue = { tab: 'bg-linear-to-b from-[#4343f2] to-[#2b2be6]', price: 'bg-linear-to-b from-[#2c2ce8] to-[#0606a8]' };
const red = { tab: 'bg-linear-to-b from-[#f04646] to-[#e22c2c]', price: 'bg-linear-to-b from-[#e62828] to-[#a80404]' };
const decDates = ['18 Dec 2019','23 Dec 00:00','26 Dec 16:00','31 Dec 08:00','6 Jan 00:00','8 Jan 16:00','13 Jan 08:00','16 Jan 00:00'];
/* rows: grid line heights; labels: [text, y]; axis: right edge of the plot */
const charts = [
  { name:'EURUSD', head:'1.10894 1.10905 1.10860 1.10883', tone:blue, active:1, series:eur, axis:391, price:84, box:['1.10883',84], split:91,
    rows:[15,39,64,89,102,127], labels:[['1.11950',15],['1.11570',39],['1.11200',64],['1.10820',90],['100',98],['80',103],['20',127],['0',131]],
    sub:'Stoch(5,3,3) 29.0548 23.1007', panel:'w-[145px]', quote:['1.10','88','3','1.10','88','3'],
    dates:['6 Jan 2020','7 Jan 12:00','8 Jan 20:00','10 Jan 04:00','13 Jan 12:00','14 Jan 20:00','16 Jan 04:00','17 Jan 12:00'] },
  { name:'GBPUSD', head:'1.29844 1.29844 1.29783 1.29784', tone:red, series:gbp, axis:391, price:109, box:['1.29784',109],
    rows:[10,35,60,84,134], labels:[['1.32850',10],['1.32070',35],['1.31310',60],['1.30550',84],['1.29010',134]],
    panel:'w-[145px]', quote:['1.29','78','4','1.29','78','7'], dates:decDates },
  { name:'USDCHF', head:'0.96804 0.96828 0.96804 0.96819', tone:red, series:chf, axis:391, price:64, box:['0.96819',64], split:91, low:1,
    rows:[14,39,64,89,103], labels:[['0.98150',14],['0.97470',39],['0.96130',89],['0.001117',98],['0.00',104],['-0.003864',131]],
    sub:'MACD(12,26,9) -0.000118 -0.000812', panel:'w-[145px]', quote:['0.96','81','9','0.96','82','4'], dates:decDates },
  { name:'USDJPY', head:'110.166 110.171 110.148 110.159', tone:blue, series:jpy, axis:395, price:12, box:['110.159',12], split:91, low:1,
    rows:[14,39,64,89,112,124,134], labels:[['109.260',39],['108.440',64],['107.640',89],['275.1235',98],['100',112],['0.00',124],['-118.671',132]],
    sub:'CCI(14) 32.4112', panel:'w-[140px]', quote:['110','15','9','110','16','0'],
    dates:['6 Jan 2020','7 Jan 08:00','8 Jan 16:00','10 Jan 00:00','13 Jan 08:00','14 Jan 16:00','16 Jan 00:00','17 Jan 08:00'] }];

const plot = c => {
  let grid = '';
  for (let x = 26; x < c.axis; x += 24) grid += `M${x}.5 3V136`;
  c.rows.forEach(y => grid += `M2 ${y}.5H${c.axis}`);
  return `<svg viewBox="0 0 425 151" class="block w-full bg-black font-['DejaVu_Sans_Condensed','DejaVu_Sans',sans-serif] text-[7px]" role="img" aria-label="${c.name} H4 chart">
    <path d="${grid}" stroke="#6c757e" stroke-dasharray="3 2" fill="none"/>
    <path d="M2 ${c.price}.5H${c.axis}" stroke="#8a94a0"/>
    <g transform="translate(-7 ${c.low ? -23 : -24}) scale(.33333)">${c.series}</g>
    <path d="M2.5 136.5V2.500H${c.axis}.5V136.500zM${Array.from({length:8}, (_, i) => `${2 + i * 48}.5 136v3`).join('M')}" stroke="#d4d4d4" fill="none"/>
    ${c.split ? `<path d="M2 ${c.split}.500H${c.axis + 1}" stroke="#c4c4c4" stroke-width="2"/>` : ''}
    <path d="M5 10.500h4.500l-2.250-2.500z" fill="#fff"/>
    <g fill="#dedede">
      <text x="14" y="11">${c.name},H4&#160; ${c.head}</text>
      ${c.sub ? `<text x="5" y="102">${c.sub}</text>` : ''}
      ${c.labels.map(([t, y]) => `<text x="${c.axis + (t.length > 7 ? 1 : 3)}" y="${y + 3}">${t}</text>`).join('')}
      ${c.dates.map((t, i) => `<text x="${2 + i * 48}" y="145">${t}</text>`).join('')}
    </g>
    <rect x="${c.axis + 1}" y="${c.box[1] - 4}" width="30" height="8" fill="#fff"/><text x="${c.axis + 3}" y="${c.box[1] + 3}" fill="#111">${c.box[0]}</text>
  </svg>`;
};

const price = (side, [a, b, s], tone) => `
  <button class="flex h-[26px] flex-1 items-end justify-center gap-[3px] pb-[2px] ${tone}" aria-label="${side}">
    <span class="text-[9px] leading-[10px] font-bold">${a}</span><span class="text-[21px] leading-[20px]">${b}</span><span class="self-start pt-[1px] text-[9px] leading-[11px] font-bold">${s}</span>
  </button>`;
const ticket = c => `
  <div class="absolute top-[16px] left-[5px] flex flex-col ${c.panel} bg-[#0b0b1c] font-['Open_Sans',sans-serif] text-white">
    <div class="flex h-[16px] gap-[2px]">
      <button class="w-[34px] text-[9px] text-white/85 ${c.tone.tab}">SELL</button>
      <div class="flex h-[15px] min-w-0 flex-1 bg-[#e4e4e4]">
        <button class="flex w-[15px] items-center justify-center" aria-label="Decrease volume"><svg class="h-[3px] w-[4px]"><use href="#caret"/></svg></button>
        <input class="w-0 min-w-0 flex-1 bg-white pr-[3px] text-right text-[9px] text-[#222]" aria-label="${c.name} volume" value="1.00">
        <button class="flex w-[15px] items-center justify-center" aria-label="Increase volume"><svg class="h-[3px] w-[4px] rotate-180"><use href="#caret"/></svg></button>
      </div>
      <button class="w-[34px] text-[9px] text-white/85 ${c.tone.tab}">BUY</button>
    </div>
    <div class="flex gap-[2px]">${price('Sell ' + c.name, c.quote.slice(0, 3), c.tone.price)}${price('Buy ' + c.name, c.quote.slice(3), c.tone.price)}</div>
  </div>`;

document.getElementById('windows').innerHTML = charts.map(c => `
  <section class="flex flex-col rounded-t-[5px] border px-[6px] pb-[8px] ${c.active ? 'border-[#3d4f5e] bg-linear-to-b from-[#a3bedb] via-[#bdd4ec] via-20% to-[#b9d3ee]' : 'border-[#767f88] bg-linear-to-b from-[#c5d3e2] via-[#d8e4f0] via-20% to-[#dbe7f4]'}" aria-label="${c.name},H4">
    <div class="flex h-[22px] items-center pt-[3px] pl-[1px]">
      <svg class="size-[12px]"><use href="#i-windows"/></svg>
      <h2 class="flex-1 text-center text-[11px] leading-[14px] text-[#2a2f36]">${c.name},H4</h2>
      <div class="flex gap-[2px] [&>button]:flex [&>button]:h-[13px] [&>button]:w-[24px] [&>button]:items-center [&>button]:justify-center [&>button]:rounded-[1px] [&>button]:border">
        <button class="${c.active ? 'border-[#7f95ad] bg-linear-to-b from-[#c9daec] to-[#a9c2dc]' : 'border-[#a3b2c2] bg-[#d5e0ec]'}" aria-label="Minimize"><svg class="h-[4px] w-[8px]" viewBox="0 0 8 4"><rect x=".5" y=".5" width="7" height="3" rx=".5" fill="#fff" stroke="#6f7986"/></svg></button>
        <button class="${c.active ? 'border-[#7f95ad] bg-linear-to-b from-[#c9daec] to-[#a9c2dc]' : 'border-[#a3b2c2] bg-[#d5e0ec]'}" aria-label="Maximize"><svg class="h-[7px] w-[8px]" viewBox="0 0 8 7"><rect x=".5" y=".5" width="7" height="6" rx=".5" fill="#fff" stroke="#6f7986"/><rect x="2.500" y="2.500" width="3" height="2" fill="none" stroke="#6f7986"/></svg></button>
        <button class="${c.active ? 'border-[#8a3a30] bg-linear-to-b from-[#e29a8c] to-[#c23a22]' : 'border-[#a3b2c2] bg-[#d5e0ec]'}" aria-label="Close"><svg class="h-[7px] w-[9px]" viewBox="0 0 9 7"><path d="M1.500 1l6 5M7.500 1l-6 5" stroke="#6f7986" stroke-width="3"/><path d="M1.500 1l6 5M7.500 1l-6 5" stroke="#fff" stroke-width="1.500"/></svg></button>
      </div>
    </div>
    <div class="relative">${plot(c)}${ticket(c)}</div>
  </section>`).join('');
</script>
</body>
</html>
